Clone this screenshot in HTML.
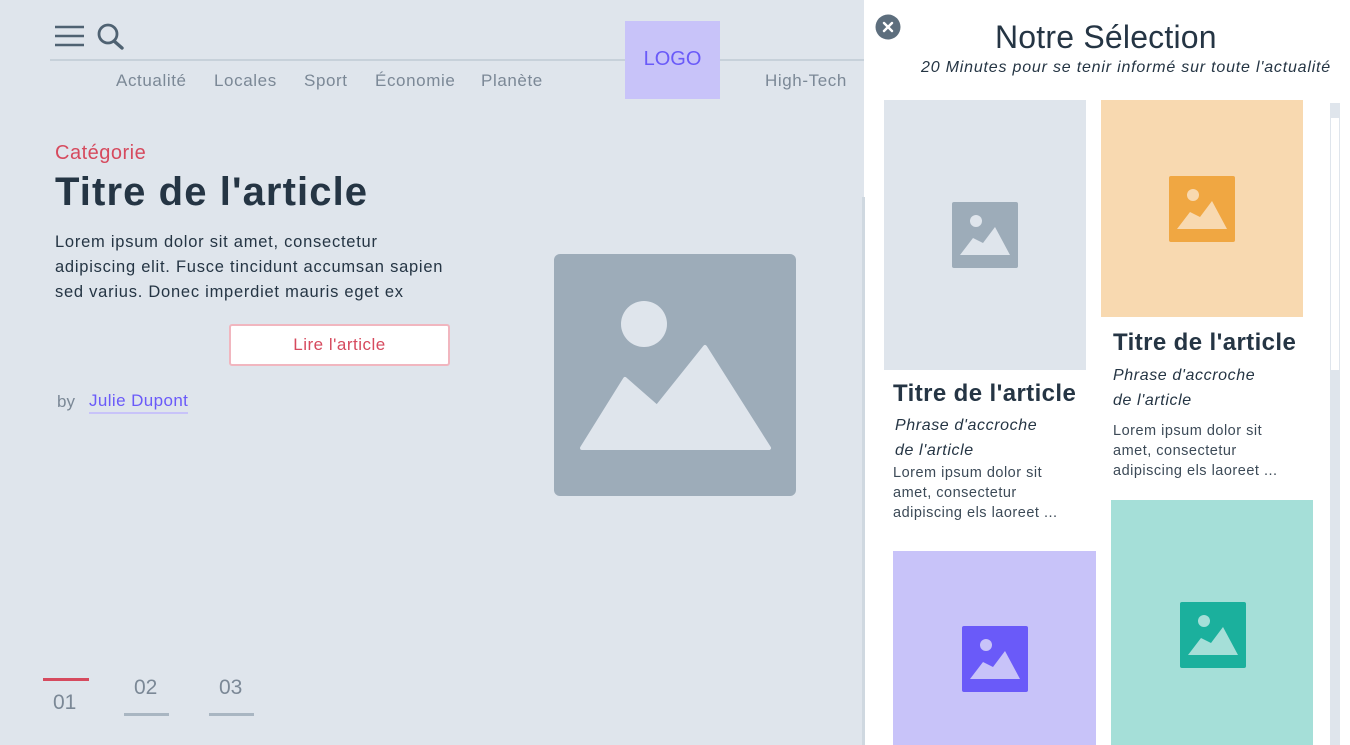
<!DOCTYPE html>
<html><head><meta charset="utf-8"><style>
*{margin:0;padding:0;box-sizing:border-box}
body{width:1350px;height:745px;overflow:hidden;background:#dfe5ec;font-family:"Liberation Sans",sans-serif;position:relative}
.a{position:absolute;white-space:nowrap}
.nav{top:71px;font-size:17px;color:#7b8896;letter-spacing:0.6px}
svg{position:absolute;display:block}
.t{font-weight:bold;color:#253544}
.ph{font-style:italic;color:#253544;font-size:16px;letter-spacing:0.6px}
.lo{color:#3c4a57;font-size:14.5px;line-height:20px;letter-spacing:0.5px}
</style></head><body>
<svg style="left:54px;top:24px" width="32" height="24" viewBox="0 0 32 24"><g stroke="#4f6272" stroke-width="2.6"><line x1="1" y1="3" x2="30" y2="3"/><line x1="1" y1="12" x2="30" y2="12"/><line x1="1" y1="21" x2="30" y2="21"/></g></svg>
<svg style="left:96px;top:22px" width="30" height="28" viewBox="0 0 30 28"><circle cx="12" cy="12" r="9" fill="none" stroke="#4f6272" stroke-width="2.8"/><line x1="18" y1="19" x2="26" y2="26" stroke="#4f6272" stroke-width="3.4" stroke-linecap="round"/></svg>
<div class="a" style="left:50px;top:59px;width:814px;height:2px;background:#c7d1da"></div>
<div class="a nav" style="left:116px">Actualité</div>
<div class="a nav" style="left:214px">Locales</div>
<div class="a nav" style="left:304px">Sport</div>
<div class="a nav" style="left:375px">Économie</div>
<div class="a nav" style="left:481px">Planète</div>
<div class="a nav" style="left:765px">High-Tech</div>
<div class="a" style="left:625px;top:21px;width:95px;height:78px;background:#c8c3f9;color:#6a5af9;font-size:20px;text-align:center;line-height:76px">LOGO</div>
<div class="a" style="left:55px;top:142px;font-size:20px;color:#d64a5e;letter-spacing:0.5px">Catégorie</div>
<div class="a t" style="left:55px;top:170px;font-size:40px;letter-spacing:1.1px">Titre de l'article</div>
<div class="a" style="left:55px;top:230px;font-size:16.5px;line-height:25px;color:#253544;letter-spacing:0.75px">Lorem ipsum dolor sit amet, consectetur<br>adipiscing elit. Fusce tincidunt accumsan sapien<br>sed varius. Donec imperdiet mauris eget ex</div>
<div class="a" style="left:229px;top:324px;width:221px;height:42px;background:#fff;border:2px solid #f1b6bf;border-radius:3px;color:#d64a5e;font-size:17px;text-align:center;line-height:37px;letter-spacing:0.5px">Lire l'article</div>
<div class="a" style="left:57px;top:392px;font-size:17px;color:#7b8896">by</div>
<div class="a" style="left:89px;top:391px;font-size:17px;color:#6a5af9;border-bottom:2px solid #c8c3f9;padding-bottom:1px;letter-spacing:0.4px">Julie Dupont</div>
<svg style="left:554px;top:254px" width="242" height="242" viewBox="0 0 242 242"><rect width="242" height="242" rx="6" fill="#9dacb9"/><circle cx="90" cy="70" r="23" fill="#dfe5ec"/><path d="M28 194 L71 125 L103 153 L151 93 L215 194 Z" fill="#dfe5ec" stroke="#dfe5ec" stroke-width="4" stroke-linejoin="round"/></svg>
<div class="a" style="left:43px;top:678px;width:46px;height:3px;background:#d64a5e"></div>
<div class="a" style="left:53px;top:691px;font-size:21px;color:#7b8896">01</div>
<div class="a" style="left:134px;top:676px;font-size:21px;color:#7b8896">02</div>
<div class="a" style="left:124px;top:713px;width:45px;height:3px;background:#a9b6c2"></div>
<div class="a" style="left:219px;top:676px;font-size:21px;color:#7b8896">03</div>
<div class="a" style="left:209px;top:713px;width:45px;height:3px;background:#a9b6c2"></div>
<div class="a" style="left:864px;top:0;width:486px;height:745px;background:#fff"></div>
<div class="a" style="left:862px;top:197px;width:3px;height:548px;background:#cfd8e0"></div>
<svg style="left:875px;top:14px" width="26" height="26" viewBox="0 0 26 26"><circle cx="13" cy="13" r="12.5" fill="#5d6e7d"/><path d="M9 9 L17 17 M17 9 L9 17" stroke="#fff" stroke-width="2.4" stroke-linecap="round"/></svg>
<div class="a" style="left:995px;top:19px;font-size:32px;color:#253544;letter-spacing:0.2px">Notre Sélection</div>
<div class="a" style="left:921px;top:59px;font-size:16px;font-style:italic;color:#253544;letter-spacing:0.8px">20 Minutes pour se tenir informé sur toute l'actualité</div>
<div class="a" style="left:1330px;top:103px;width:10px;height:642px;background:#dfe5ec"></div>
<div class="a" style="left:1331px;top:118px;width:8px;height:252px;background:#fff"></div>
<div class="a" style="left:884px;top:100px;width:202px;height:270px;background:#dfe5ec"></div>
<svg style="left:952px;top:202px" width="66" height="66" viewBox="0 0 66 66"><rect width="66" height="66" rx="2" fill="#9dacb9"/><circle cx="24" cy="19" r="6" fill="#dfe5ec"/><path d="M8 53 L21 36 L31 41 L43 25 L58 53Z" fill="#dfe5ec"/></svg>
<div class="a t" style="left:893px;top:380px;font-size:24px;letter-spacing:0.4px">Titre de l'article</div>
<div class="a ph" style="left:895px;top:413px;line-height:25px">Phrase d'accroche<br>de l'article</div>
<div class="a lo" style="left:893px;top:463px">Lorem ipsum dolor sit<br>amet, consectetur<br>adipiscing els laoreet ...</div>
<div class="a" style="left:1101px;top:100px;width:202px;height:217px;background:#f8d9b0"></div>
<svg style="left:1169px;top:176px" width="66" height="66" viewBox="0 0 66 66"><rect width="66" height="66" rx="2" fill="#f0a742"/><circle cx="24" cy="19" r="6" fill="#f8d9b0"/><path d="M8 53 L21 36 L31 41 L43 25 L58 53Z" fill="#f8d9b0"/></svg>
<div class="a t" style="left:1113px;top:329px;font-size:24px;letter-spacing:0.4px">Titre de l'article</div>
<div class="a ph" style="left:1113px;top:363px;line-height:25px">Phrase d'accroche<br>de l'article</div>
<div class="a lo" style="left:1113px;top:421px">Lorem ipsum dolor sit<br>amet, consectetur<br>adipiscing els laoreet ...</div>
<div class="a" style="left:893px;top:551px;width:203px;height:194px;background:#c8c3f9"></div>
<svg style="left:962px;top:626px" width="66" height="66" viewBox="0 0 66 66"><rect width="66" height="66" rx="2" fill="#6a5af9"/><circle cx="24" cy="19" r="6" fill="#c8c3f9"/><path d="M8 53 L21 36 L31 41 L43 25 L58 53Z" fill="#c8c3f9"/></svg>
<div class="a" style="left:1111px;top:500px;width:202px;height:245px;background:#a5dfd8"></div>
<svg style="left:1180px;top:602px" width="66" height="66" viewBox="0 0 66 66"><rect width="66" height="66" rx="2" fill="#1bb09d"/><circle cx="24" cy="19" r="6" fill="#a5dfd8"/><path d="M8 53 L21 36 L31 41 L43 25 L58 53Z" fill="#a5dfd8"/></svg>
</body></html>
